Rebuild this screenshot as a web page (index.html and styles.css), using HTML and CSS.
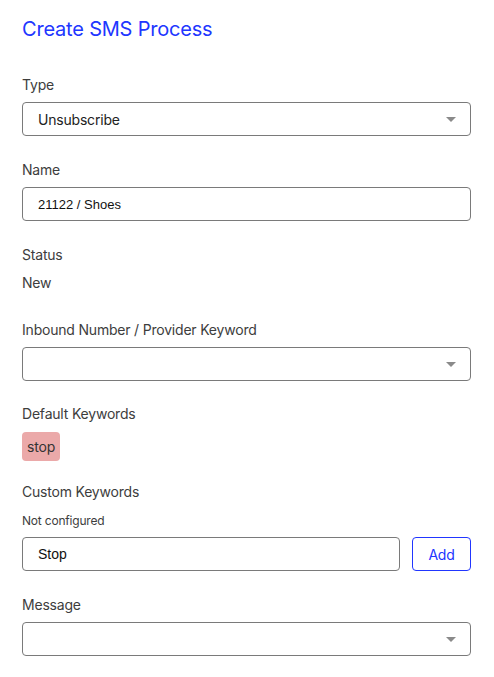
FILE: index.html
```html
<!DOCTYPE html>
<html>
<head>
<meta charset="utf-8">
<link rel="stylesheet" href="styles.css">
</head>
<body>
<main class="form">
  <h1 class="title">Create SMS Process</h1>

  <div class="field">
    <div class="label">Type</div>
    <div class="select"><span class="select-value">Unsubscribe</span><span class="caret"></span></div>
  </div>

  <div class="field">
    <div class="label">Name</div>
    <div class="input">21122 / Shoes</div>
  </div>

  <div class="field">
    <div class="label">Status</div>
    <div class="value">New</div>
  </div>

  <div class="field field-inbound">
    <div class="label">Inbound Number / Provider Keyword</div>
    <div class="select"><span class="select-value"></span><span class="caret"></span></div>
  </div>

  <div class="field field-default">
    <div class="label">Default Keywords</div>
    <div class="tags"><span class="tag">stop</span></div>
  </div>

  <div class="field field-custom">
    <div class="label">Custom Keywords</div>
    <div class="hint">Not configured</div>
    <div class="row">
      <div class="input input-grow input-lg">Stop</div>
      <button class="btn">Add</button>
    </div>
  </div>

  <div class="field">
    <div class="label">Message</div>
    <div class="select"><span class="select-value"></span><span class="caret"></span></div>
  </div>
</main>
</body>
</html>
```

FILE: styles.css
```css
html, body {
  margin: 0;
  padding: 0;
  background: #ffffff;
}
body {
  font-family: Inter, "Noto Sans", sans-serif;
  color: #3a3a3a;
  letter-spacing: -0.2px;
}
.form {
  display: flex;
  flex-direction: column;
  padding: 17px 23px 0 22px;
}
.title {
  margin: 0 0 34px 0;
  font-size: 20px;
  line-height: 24px;
  font-weight: 400;
  color: #2136ff;
  letter-spacing: -0.2px;
}
.field {
  display: flex;
  flex-direction: column;
  margin-bottom: 24px;
}
.field-inbound {
  margin-top: 3px;
  margin-bottom: 23px;
}
.field-default {
  margin-bottom: 21px;
}
.field-custom {
  margin-bottom: 24px;
}
.label {
  font-size: 14px;
  line-height: 20px;
  color: #3d3d3d;
  margin-bottom: 7px;
}
.value {
  font-size: 14px;
  line-height: 20px;
  color: #3d3d3d;
  margin-top: 1px;
}
.select, .input {
  box-sizing: border-box;
  height: 34px;
  border: 1px solid #7a7a7a;
  border-radius: 4px;
  display: flex;
  align-items: center;
  padding: 0 15px;
}
.select {
  justify-content: space-between;
}
.select-value {
  font-size: 14px;
  color: #222;
}
.caret {
  width: 0;
  height: 0;
  border-left: 5px solid transparent;
  border-right: 5px solid transparent;
  border-top: 5px solid #8a8a8a;
  margin-right: -1px;
}
.input {
  font-family: "Liberation Sans", Arial, sans-serif;
  font-size: 13px;
  color: #111;
  letter-spacing: 0;
}
.input-lg {
  font-size: 14px;
}
.tags {
  display: flex;
  margin-top: 1px;
}
.tag {
  display: inline-flex;
  align-items: center;
  height: 29px;
  padding: 0 5px;
  background: #eba9a9;
  border-radius: 4px;
  font-size: 14px;
  color: #333;
}
.hint {
  font-size: 12px;
  line-height: 16px;
  color: #3d3d3d;
  margin-top: 4px;
  margin-bottom: 8px;
}
.row {
  display: flex;
  gap: 12px;
}
.input-grow {
  flex: 1;
}
.btn {
  box-sizing: border-box;
  width: 59px;
  height: 34px;
  border: 1px solid #2136ff;
  border-radius: 4px;
  background: #fff;
  color: #2136ff;
  font-family: Inter, "Noto Sans", sans-serif;
  font-size: 14px;
  letter-spacing: -0.2px;
  padding: 0;
}
```
